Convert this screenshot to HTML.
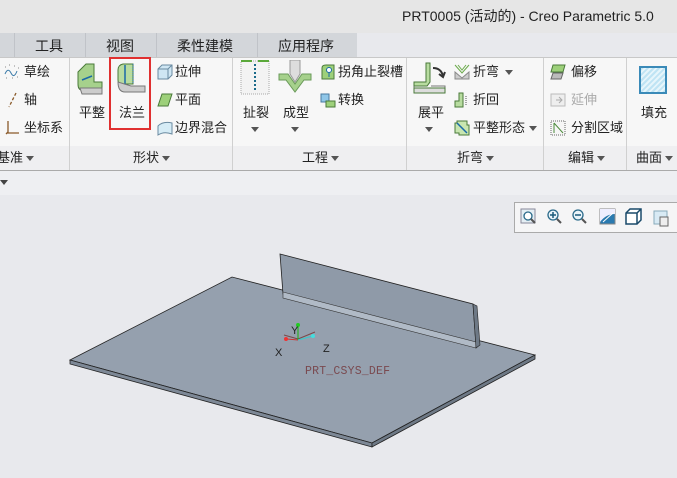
<!DOCTYPE html>
<html><head><meta charset="utf-8"><style>
*{margin:0;padding:0;box-sizing:border-box}
body{width:677px;height:478px;overflow:hidden;background:#e8e9ed;font-family:"Liberation Sans","Noto Sans CJK SC",sans-serif;font-size:13px;color:#222;position:relative}
.a{position:absolute;white-space:nowrap}
.t{font-size:13px;line-height:16px}
.arr{display:inline-block;width:0;height:0;border-left:4px solid transparent;border-right:4px solid transparent;border-top:5px solid #555;vertical-align:middle;margin-left:3px}
.sep{position:absolute;top:58px;width:1px;height:112px;background:#d0d0d0}
.ic{position:absolute;width:16px;height:16px}
</style></head><body>
<div class="a" style="left:0;top:0;width:677px;height:33px;background:#e6e6e6"></div>
<div class="a" style="left:402px;top:6px;font-size:14px;color:#222">PRT0005 (活动的) - Creo Parametric 5.0</div>
<div class="a" style="left:0;top:33px;width:357px;height:25px;background:#d3d6da"></div>
<div class="a" style="left:14px;top:33px;width:1px;height:25px;background:#c0c3c8"></div>
<div class="a" style="left:85px;top:33px;width:1px;height:25px;background:#c0c3c8"></div>
<div class="a" style="left:156px;top:33px;width:1px;height:25px;background:#c0c3c8"></div>
<div class="a" style="left:257px;top:33px;width:1px;height:25px;background:#c0c3c8"></div>
<div class="a" style="left:35px;top:36px;font-size:14px">工具</div>
<div class="a" style="left:106px;top:36px;font-size:14px">视图</div>
<div class="a" style="left:177px;top:36px;font-size:14px">柔性建模</div>
<div class="a" style="left:278px;top:36px;font-size:14px">应用程序</div>
<div class="a" style="left:0;top:57px;width:677px;height:1px;background:#c8c8c8"></div>
<div class="a" style="left:0;top:58px;width:677px;height:88px;background:#f7f7f7"></div>
<div class="a" style="left:0;top:146px;width:677px;height:24px;background:#efeff1"></div>
<div class="a" style="left:0;top:170px;width:677px;height:1px;background:#aaa"></div>
<div class="a" style="left:0;top:171px;width:677px;height:24px;background:#eeeff2"></div>
<div class="a" style="left:0;top:180px;width:0;height:0;border-left:4px solid transparent;border-right:4px solid transparent;border-top:5px solid #444"></div>
<div class="sep" style="left:69px"></div><div class="sep" style="left:232px"></div><div class="sep" style="left:406px"></div><div class="sep" style="left:543px"></div><div class="sep" style="left:626px"></div>
<div class="a t" style="left:-3px;top:150px">基准<span class="arr"></span></div>
<div class="a t" style="left:133px;top:150px">形状<span class="arr"></span></div>
<div class="a t" style="left:302px;top:150px">工程<span class="arr"></span></div>
<div class="a t" style="left:457px;top:150px">折弯<span class="arr"></span></div>
<div class="a t" style="left:568px;top:150px">编辑<span class="arr"></span></div>
<div class="a t" style="left:636px;top:150px">曲面<span class="arr"></span></div>
<svg class="ic" style="left:4px;top:64px"><path d="M1 10 Q4 3 7 9 T13 7" stroke="#3a7aa8" fill="none"/><path d="M1 3h1M5 1h1M10 2h1M14 4h1M2 14h1M8 14h1M13 13h1" stroke="#888"/></svg>
<div class="a t" style="left:24px;top:64px">草绘</div>
<svg class="ic" style="left:5px;top:92px"><path d="M11 1 L4 15" stroke="#8a5a2a" stroke-dasharray="3 2" stroke-width="1.3"/></svg>
<div class="a t" style="left:24px;top:92px">轴</div>
<svg class="ic" style="left:4px;top:120px"><path d="M4 1 V13 H15 M2 14 L4 12" stroke="#8a5a2a" fill="none" stroke-width="1.3"/></svg>
<div class="a t" style="left:24px;top:120px">坐标系</div>
<svg class="a" style="left:76px;top:62px" width="28" height="34"><path d="M2 10 L10 2 H18 V20 L26 20 V28 H6 Q2 28 2 22Z" fill="#a6d18c" stroke="#4a7a3a"/><path d="M4 26 H26 V32 H6Z" fill="#ccc" stroke="#777"/><path d="M6 18 L16 14" stroke="#1a6aa8" stroke-width="1.5"/></svg>
<div class="a t" style="left:79px;top:105px">平整</div>
<svg class="a" style="left:115px;top:62px" width="32" height="34"><path d="M3 8 Q3 3 8 2 H18 V22 H6 Q3 22 3 18Z" fill="#b8dca0" stroke="#4a7a3a"/><path d="M10 3 V22" stroke="#1a6aa8" stroke-width="1.5"/><path d="M18 2 V22" stroke="#1a6aa8" stroke-dasharray="1 1"/><path d="M3 20 Q3 30 10 30 H30 V24 H16 Z" fill="#ccc" stroke="#777"/></svg>
<div class="a t" style="left:119px;top:105px">法兰</div>
<div class="a" style="left:109px;top:57px;width:42px;height:73px;border:2px solid #e03030"></div>
<svg class="ic" style="left:157px;top:64px"><path d="M1 5 L5 1 H15 V11 L11 15 H1Z" fill="#cfe6f3" stroke="#6a8aa0"/><path d="M1 5 H11 V15 M11 5 L15 1" stroke="#6a8aa0" fill="none"/></svg>
<div class="a t" style="left:175px;top:64px">拉伸</div>
<svg class="ic" style="left:157px;top:92px"><path d="M5 2 H15 L11 14 H1Z" fill="#9dd07a" stroke="#4a7a3a"/></svg>
<div class="a t" style="left:175px;top:92px">平面</div>
<svg class="ic" style="left:157px;top:120px"><path d="M1 6 Q6 1 15 3 V14 Q7 11 1 15Z" fill="#d6ecf6" stroke="#6a8aa0"/></svg>
<div class="a t" style="left:175px;top:120px">边界混合</div>
<svg class="a" style="left:240px;top:60px" width="30" height="36"><path d="M1 1 H29 V34 H1Z" fill="#f3f3f3" stroke="#aaa" stroke-dasharray="1 1"/><path d="M1 1 H12 M18 1 H29" stroke="#5aa83a" stroke-width="2"/><path d="M15 4 V30" stroke="#1a6a8a" stroke-dasharray="2 2" stroke-width="2"/></svg>
<div class="a t" style="left:243px;top:105px">扯裂</div>
<div class="a" style="left:251px;top:127px;border-left:4px solid transparent;border-right:4px solid transparent;border-top:5px solid #555"></div>
<svg class="a" style="left:278px;top:60px" width="34" height="36"><path d="M12 0 H22 V14 L17 22 L12 14Z" fill="#ddd" stroke="#999"/><path d="M1 14 L10 14 L17 24 L24 14 H33 L33 20 H26 L17 32 L8 20 H1Z" fill="#a6d18c" stroke="#6a9a5a"/></svg>
<div class="a t" style="left:283px;top:105px">成型</div>
<div class="a" style="left:291px;top:127px;border-left:4px solid transparent;border-right:4px solid transparent;border-top:5px solid #555"></div>
<svg class="ic" style="left:320px;top:64px"><path d="M2 4 Q2 1 6 1 H14 V15 H2Z" fill="#9dd07a" stroke="#4a7a3a"/><circle cx="9" cy="6" r="2.5" fill="#fff" stroke="#1a6aa8"/><path d="M9 8 V13" stroke="#1a6aa8"/></svg>
<div class="a t" style="left:338px;top:64px">拐角止裂槽</div>
<svg class="ic" style="left:320px;top:92px"><path d="M1 2 H9 V10 H1Z" fill="#8fc6e8" stroke="#4a7aa0"/><path d="M6 9 H15 V15 H6Z" fill="#9dd07a" stroke="#4a7a3a"/></svg>
<div class="a t" style="left:338px;top:92px">转换</div>
<svg class="a" style="left:413px;top:62px" width="34" height="32"><path d="M13 1 H17 V20 L14 24 H1 V30 H32 V24 H18" fill="none" stroke="#777"/><path d="M1 24 H14 L17 20 V1 H13 V20 H1Z" fill="#b8dca0" stroke="#4a7a3a"/><path d="M1 26 H32 V31 H1Z" fill="#ddd" stroke="#4a7a3a"/><path d="M20 6 Q28 6 30 14 M26 12 L30 15 L32 10" stroke="#333" stroke-width="2" fill="none"/></svg>
<div class="a t" style="left:418px;top:105px">展平</div>
<div class="a" style="left:425px;top:127px;border-left:4px solid transparent;border-right:4px solid transparent;border-top:5px solid #555"></div>
<svg class="ic" style="left:454px;top:64px"><path d="M1 1 L8 9 L15 1 M4 1 L8 6 L12 1" stroke="#6aaa4a" fill="none"/><path d="M1 8 L8 14 L15 8 V15 H1Z" fill="#ccc" stroke="#888"/></svg>
<div class="a t" style="left:473px;top:64px">折弯</div>
<div class="a" style="left:505px;top:70px;border-left:4px solid transparent;border-right:4px solid transparent;border-top:5px solid #555"></div>
<svg class="ic" style="left:454px;top:92px"><path d="M1 15 V9 H5 V1 H9 V15Z" fill="#b8dca0" stroke="#4a7a3a"/><path d="M12 4 V14" stroke="#555" stroke-dasharray="1 1"/></svg>
<div class="a t" style="left:473px;top:92px">折回</div>
<svg class="ic" style="left:454px;top:120px"><path d="M3 1 H13 V5 H15 V15 H5 V13 H1 V3 H3Z" fill="#c8e6b0" stroke="#4a7a3a"/><path d="M3 3 L13 13" stroke="#1a6aa8" stroke-width="1.5"/></svg>
<div class="a t" style="left:473px;top:120px">平整形态</div>
<div class="a" style="left:529px;top:126px;border-left:4px solid transparent;border-right:4px solid transparent;border-top:5px solid #555"></div>
<svg class="ic" style="left:550px;top:64px"><path d="M3 1 H15 L13 8 H1Z" fill="#9dd07a" stroke="#4a7a3a"/><path d="M3 9 H13 L11 15 H1Z" fill="#bbb" stroke="#666"/></svg>
<div class="a t" style="left:571px;top:64px">偏移</div>
<svg class="ic" style="left:550px;top:92px"><path d="M1 2 H15 V14 H1Z" fill="#eee" stroke="#bbb"/><path d="M6 8 H12 M9 5 L12 8 L9 11" stroke="#aaa" fill="none"/></svg>
<div class="a t" style="left:571px;top:92px;color:#aaa">延伸</div>
<svg class="ic" style="left:550px;top:120px"><path d="M1 1 H15 V15 H1Z" fill="#f6f6f6" stroke="#666" stroke-dasharray="1 1"/><path d="M4 3 L13 13 M4 3 V13" stroke="#4a8a3a"/></svg>
<div class="a t" style="left:571px;top:120px">分割区域</div>
<div class="a" style="left:639px;top:66px;width:28px;height:28px;background:repeating-linear-gradient(135deg,#bfe4f4 0 2px,#e6f5fb 2px 4px);border:2px solid #3a8ab8"></div>
<div class="a t" style="left:641px;top:105px">填充</div>
<div class="a" style="left:514px;top:202px;width:170px;height:31px;background:#f5f5f6;border:1px solid #aaa"></div>
<svg class="a" style="left:520px;top:208px" width="156" height="20">
<rect x="1" y="1" width="14" height="14" fill="#e4eef4" stroke="#889"/><circle cx="8" cy="8" r="4" fill="#fff" stroke="#2a6a8a" stroke-width="1.3"/><path d="M11 11 L15 15" stroke="#555" stroke-width="2"/>
<circle cx="33" cy="7" r="5" fill="#eaf4fa" stroke="#2a6a8a" stroke-width="1.3"/><path d="M30 7h6M33 4v6" stroke="#1a5a7a" stroke-width="1.5"/><path d="M37 11 L41 15" stroke="#555" stroke-width="2"/>
<circle cx="58" cy="7" r="5" fill="#eaf4fa" stroke="#2a6a8a" stroke-width="1.3"/><path d="M55 7h6" stroke="#1a5a7a" stroke-width="1.5"/><path d="M62 11 L66 15" stroke="#555" stroke-width="2"/>
<rect x="80" y="1" width="15" height="15" fill="#2a7ab0" stroke="#888"/><path d="M80 1 H95 V6 Q86 6 80 14Z" fill="#eef"/><path d="M83 14 L93 5" stroke="#fff"/>
<path d="M106 5 L110 1 H121 V12 L117 16 H106Z" fill="#fff" stroke="#1a4a6a" stroke-width="1.5"/><path d="M106 5 H117 V16 M117 5 L121 1" stroke="#1a4a6a" stroke-width="1.5" fill="none"/>
<rect x="134" y="3" width="13" height="13" fill="#d8eaf4" stroke="#8ab"/><rect x="140" y="9" width="8" height="9" fill="#eee" stroke="#666"/>
</svg>
<svg class="a" style="left:0;top:0" width="677" height="478">
<path d="M70 360 L232 277 L535 355 L372 443Z" fill="#95a0ae" stroke="#222" stroke-width="0.8"/>
<path d="M70 360 L372 443 L372 447 L70 364Z" fill="#7d8896" stroke="#222" stroke-width="0.8"/>
<path d="M372 443 L535 355 L535 359 L372 447Z" fill="#6e7986" stroke="#222" stroke-width="0.8"/>
<path d="M280 254 L473 304 L476 345 L283 294Z" fill="#8f9aa8" stroke="#222" stroke-width="0.8"/>
<path d="M283 292 L476 342 L476 348 L283 298Z" fill="#b0bac6" stroke="#333" stroke-width="0.6"/>
<path d="M473 304 L477 306 L480 345 L476 348Z" fill="#6e7986" stroke="#222" stroke-width="0.6"/>
<path d="M298 339 V325 M298 339 L284 335 M298 339 L315 332" stroke="#7a4a4a" stroke-width="1"/>
<path d="M298 340 V325" stroke="#0c0" stroke-width="0.8"/><circle cx="298" cy="325" r="2" fill="#2c2"/>
<path d="M298 340 L287 339" stroke="#c33"/><circle cx="286" cy="339" r="2" fill="#e33"/>
<path d="M298 340 L313 336" stroke="#3cc"/><circle cx="313" cy="336" r="2" fill="#4dd"/>
<text x="291" y="334" font-size="11" fill="#222" font-family="Liberation Sans">Y</text>
<text x="275" y="356" font-size="11" fill="#222" font-family="Liberation Sans">X</text>
<text x="323" y="352" font-size="11" fill="#222" font-family="Liberation Sans">Z</text>
<text x="305" y="374" font-size="11.5" fill="#7a4a50" font-family="Liberation Mono" letter-spacing="0.2">PRT_CSYS_DEF</text>
</svg>
</body></html>
